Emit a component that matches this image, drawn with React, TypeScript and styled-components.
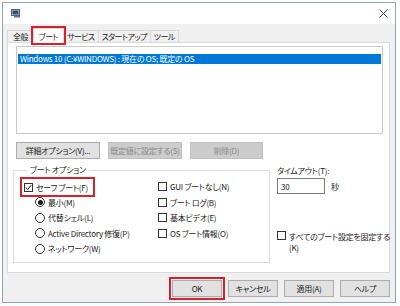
import styled, { createGlobalStyle, css } from "styled-components";

const GlobalStyle = createGlobalStyle`
  html, body {
    margin: 0;
    padding: 0;
    background: #ffffff;
  }
  body {
    width: 400px;
    height: 306px;
    overflow: hidden;
    font-family: "Noto Sans CJK JP", "Noto Sans", sans-serif;
    font-feature-settings: "palt";
    font-size: 8px;
    letter-spacing: -0.25px;
    color: #1a1a1a;
  }
  * {
    box-sizing: border-box;
  }
`;

const redMark = css`
  outline: 2px solid #d8202c;
`;

const Window = styled.div`
  margin: 2px 0 0 2px;
  width: 394px;
  height: 301px;
  border: 1px solid #97a3b6;
  display: flex;
  flex-direction: column;
  background: #f0f0f0;
`;

const TitleBar = styled.div`
  height: 21px;
  background: #ffffff;
  display: flex;
  align-items: center;
  justify-content: space-between;
  padding: 0 5px 0 8px;
`;

const CloseBtn = styled.div`
  width: 14px;
  height: 14px;
  display: flex;
  align-items: center;
  justify-content: center;
`;

const Body = styled.div`
  flex: 1;
  display: flex;
  flex-direction: column;
  padding: 5px 5px 0 4px;
`;

const TabStrip = styled.div`
  display: flex;
  height: 14px;
  align-items: flex-end;
`;

const Tab = styled.div<{ $active?: boolean }>`
  height: ${(p) => (p.$active ? "15px" : "13px")};
  padding: 0 ${(p) => (p.$active ? "5px" : "3px")};
  display: flex;
  align-items: center;
  white-space: nowrap;
  letter-spacing: -0.6px;
  background: ${(p) => (p.$active ? "#ffffff" : "#f0f0f0")};
  border: 1px solid #d9d9d9;
  border-bottom: ${(p) => (p.$active ? "none" : "1px solid #d9d9d9")};
  margin-left: -1px;
  position: relative;
  z-index: ${(p) => (p.$active ? 1 : 0)};
  ${(p) => p.$active && redMark}
  &:first-child {
    margin-left: 0;
    padding: 0 5px;
  }
`;

const Panel = styled.div`
  height: 231px;
  margin-top: -1px;
  background: #ffffff;
  border: 1px solid #d9d9d9;
  padding: 3px 6px 0 8px;
  display: flex;
  flex-direction: column;
`;

const ListBox = styled.div`
  height: 88px;
  border: 1px solid #c9c9c9;
  padding: 7px 1px 0 1px;
`;

const ListItem = styled.div<{ $selected?: boolean }>`
  height: 10px;
  line-height: 10px;
  padding-left: 2px;
  background: ${(p) => (p.$selected ? "#0078d7" : "transparent")};
  color: ${(p) => (p.$selected ? "#ffffff" : "#1a1a1a")};
  white-space: nowrap;
`;

const ButtonRow = styled.div`
  display: flex;
  gap: 8px;
  margin-top: 8px;
`;

const Button = styled.button<{ $w: number; $marked?: boolean }>`
  width: ${(p) => p.$w}px;
  height: 17px;
  padding: 0;
  font: inherit;
  font-feature-settings: "palt";
  letter-spacing: -0.25px;
  white-space: nowrap;
  background: #e1e1e1;
  border: 1px solid #adadad;
  color: #1a1a1a;
  &:disabled {
    background: #cccccc;
    border-color: #bfbfbf;
    color: #8a8a8a;
  }
  ${(p) => p.$marked && redMark}
  ${(p) => p.$marked && "outline-offset: 1px;"}
`;

const OptionsRow = styled.div`
  display: flex;
  margin-top: 6px;
`;

const GroupBox = styled.fieldset`
  width: 264px;
  height: 98px;
  margin: 0 0 0 -3px;
  padding: 4px 0 0 10px;
  border: 1px solid #dcdcdc;
  display: flex;
`;

const Legend = styled.legend`
  padding: 0 3px;
  margin-left: 3px;
  line-height: 10px;
`;

const Column = styled.div<{ $w: number }>`
  width: ${(p) => p.$w}px;
  display: flex;
  flex-direction: column;
`;

const OptionRow = styled.label<{ $indent?: boolean; $marked?: boolean }>`
  height: 15.5px;
  display: flex;
  align-items: center;
  gap: 3px;
  padding-left: ${(p) => (p.$indent ? "11px" : "0")};
  white-space: nowrap;
  align-self: flex-start;
  ${(p) =>
    p.$marked &&
    css`
      outline: 2px solid #d8202c;
      outline-offset: 2px;
      height: 12px;
      margin: 2px 0 1.5px;
      padding-right: 3px;
    `}
`;

const CheckBox = styled.span`
  width: 9px;
  height: 9px;
  border: 1px solid #333333;
  background: #ffffff;
  display: flex;
  align-items: center;
  justify-content: center;
  flex-shrink: 0;
`;

const Radio = styled.span<{ $on?: boolean }>`
  width: 10px;
  height: 10px;
  border: 1px solid #333333;
  border-radius: 50%;
  background: #ffffff;
  display: flex;
  align-items: center;
  justify-content: center;
  flex-shrink: 0;
  &::after {
    content: "";
    width: 5px;
    height: 5px;
    border-radius: 50%;
    background: ${(p) => (p.$on ? "#1a1a1a" : "transparent")};
  }
`;

const SideColumn = styled.div`
  margin-left: 7px;
  width: 106px;
  display: flex;
  flex-direction: column;
  padding-top: 1px;
`;

const FieldLabel = styled.div`
  line-height: 10px;
`;

const TimeoutRow = styled.div`
  display: flex;
  align-items: center;
  gap: 6px;
  margin-top: 2px;
`;

const TextBox = styled.div`
  width: 48px;
  height: 16px;
  border: 1px solid #7a7a7a;
  padding-left: 3px;
  display: flex;
  align-items: center;
`;

const LockRow = styled.div`
  display: flex;
  align-items: flex-start;
  gap: 3px;
  margin-top: 37px;
  line-height: 11px;
  white-space: nowrap;
`;

const Footer = styled.div`
  display: flex;
  justify-content: flex-end;
  gap: 6px;
  margin-top: 7px;
`;

function Check({ on }: { on?: boolean }) {
  return (
    <CheckBox>
      {on && (
        <svg width="7" height="7" viewBox="0 0 7 7">
          <path d="M0.8 3.6 L2.7 5.5 L6.2 1.2" fill="none" stroke="#1a1a1a" strokeWidth="1" />
        </svg>
      )}
    </CheckBox>
  );
}

function AppIcon() {
  return (
    <svg width="10" height="9" viewBox="0 0 10 9">
      <rect x="0.5" y="0.5" width="8" height="6" fill="#c8d0dc" stroke="#5a6678" />
      <rect x="1.5" y="1.5" width="6" height="4" fill="#2f4f86" />
      <rect x="3" y="7" width="6" height="1.5" fill="#6b7689" />
    </svg>
  );
}

const tabs = ["全般", "ブート", "サービス", "スタートアップ", "ツール"];

export default function App() {
  return (
    <>
      <GlobalStyle />
      <Window>
        <TitleBar>
          <AppIcon />
          <CloseBtn>
            <svg width="9" height="9" viewBox="0 0 9 9">
              <path d="M0.5 0.5 L8.5 8.5 M8.5 0.5 L0.5 8.5" stroke="#333" strokeWidth="0.9" />
            </svg>
          </CloseBtn>
        </TitleBar>
        <Body>
          <TabStrip>
            {tabs.map((t) => (
              <Tab key={t} $active={t === "ブート"}>
                {t}
              </Tab>
            ))}
          </TabStrip>
          <Panel>
            <ListBox>
              <ListItem $selected>Windows 10 (C:¥WINDOWS) : 現在の OS; 既定の OS</ListItem>
            </ListBox>
            <ButtonRow>
              <Button $w={84}>詳細オプション(V)...</Button>
              <Button $w={74} disabled>
                既定値に設定する(S)
              </Button>
              <Button $w={73} disabled>
                削除(D)
              </Button>
            </ButtonRow>
            <OptionsRow>
              <GroupBox>
                <Legend>ブート オプション</Legend>
                <Column $w={134}>
                  <OptionRow $marked>
                    <Check on />
                    セーフ ブート(F)
                  </OptionRow>
                  <OptionRow $indent>
                    <Radio $on />
                    最小(M)
                  </OptionRow>
                  <OptionRow $indent>
                    <Radio />
                    代替シェル(L)
                  </OptionRow>
                  <OptionRow $indent>
                    <Radio />
                    Active Directory 修復(P)
                  </OptionRow>
                  <OptionRow $indent>
                    <Radio />
                    ネットワーク(W)
                  </OptionRow>
                </Column>
                <Column $w={110}>
                  <OptionRow>
                    <Check />
                    GUI ブートなし(N)
                  </OptionRow>
                  <OptionRow>
                    <Check />
                    ブート ログ(B)
                  </OptionRow>
                  <OptionRow>
                    <Check />
                    基本ビデオ(E)
                  </OptionRow>
                  <OptionRow>
                    <Check />
                    OS ブート情報(O)
                  </OptionRow>
                </Column>
              </GroupBox>
              <SideColumn>
                <FieldLabel>タイムアウト(T):</FieldLabel>
                <TimeoutRow>
                  <TextBox>30</TextBox>
                  秒
                </TimeoutRow>
                <LockRow>
                  <Check />
                  <span>
                    すべてのブート設定を固定する
                    <br />
                    (K)
                  </span>
                </LockRow>
              </SideColumn>
            </OptionsRow>
          </Panel>
          <Footer>
            <Button $w={50} $marked>
              OK
            </Button>
            <Button $w={50}>キャンセル</Button>
            <Button $w={50}>適用(A)</Button>
            <Button $w={50}>ヘルプ</Button>
          </Footer>
        </Body>
      </Window>
    </>
  );
}
